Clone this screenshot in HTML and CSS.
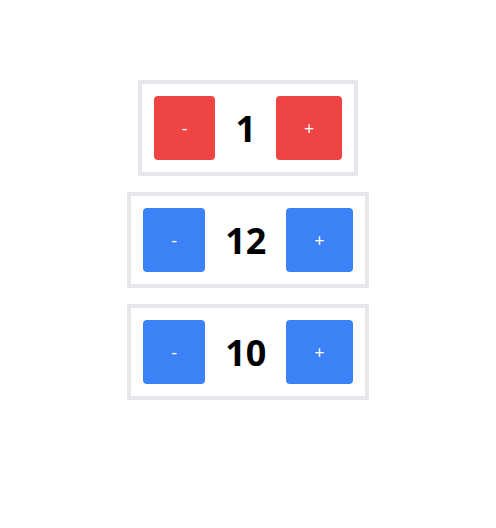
FILE: index.html
```html
<!DOCTYPE html>
<html lang="en">
<head>
    <meta charset="UTF-8">
    <meta name="viewport" content="width=device-width, initial-scale=1.0">
    <title>Counters</title>
    <link rel="stylesheet" href="styles.css">
</head>
<body>
    <div class="counters">
        <div class="counter">
            <button class="counter-btn red">-</button>
            <span class="count">1</span>
            <button class="counter-btn red">+</button>
        </div>

        <div class="counter">
            <button class="counter-btn blue">-</button>
            <span class="count">12</span>
            <button class="counter-btn blue">+</button>
        </div>

        <div class="counter">
            <button class="counter-btn blue">-</button>
            <span class="count">10</span>
            <button class="counter-btn blue">+</button>
        </div>
    </div>
</body>
</html>
```

FILE: styles.css
```css
* {
    margin: 0;
    padding: 0;
    box-sizing: border-box;
    font-family: 'Open Sans', sans-serif;
}

body {
    background-color: white;
}

.counters {
    display: flex;
    flex-direction: column;
    align-items: center;
    gap: 16px;
    padding-top: 80px;
}

.counter {
    display: flex;
    align-items: center;
    padding: 12px;
    border: 4px solid #e5e7eb;
}

.counter-btn {
    padding: 18px 28px;
    border: none;
    border-radius: 4px;
    color: white;
    font-size: 18px;
    line-height: 28px;
    cursor: pointer;
}

.red {
    background-color: #ef4444;
}

.blue {
    background-color: #3b82f6;
}

.count {
    margin: 0 20px;
    font-size: 36px;
    font-weight: 700;
    color: black;
}
```
